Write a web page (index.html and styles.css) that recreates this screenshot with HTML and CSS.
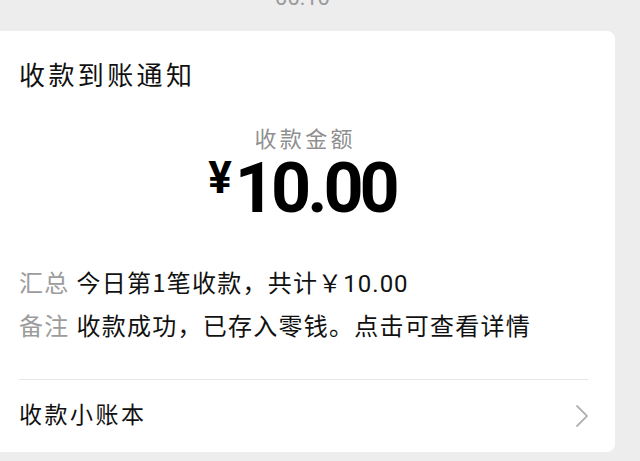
FILE: index.html
```html
<!DOCTYPE html>
<html lang="zh-CN">
<head>
<meta charset="utf-8">
<title>收款到账通知</title>
<link rel="stylesheet" href="styles.css">
</head>
<body>
<div class="page">
  <div class="time">00:10</div>
  <div class="card">
    <div class="title">收款到账通知</div>
    <div class="amount-label">收款金额</div>
    <div class="amount"><span class="yen">¥</span><span class="num">10.00</span></div>
    <div class="details">
      <div class="row"><span class="key">汇总</span><span class="val">今日第1笔收款，共计<span class="latin">￥10.00</span></span></div>
      <div class="row"><span class="key">备注</span><span class="val">收款成功，已存入零钱。点击可查看详情</span></div>
    </div>
    <div class="footer">
      <span class="footer-text">收款小账本</span>
      <svg class="chevron" width="14" height="24" viewBox="0 0 14 24"><polyline points="2,2 12,12 2,22" fill="none" stroke="#b4b4b4" stroke-width="1.8" stroke-linecap="round" stroke-linejoin="round"/></svg>
    </div>
  </div>
</div>
</body>
</html>
```

FILE: styles.css
```css
html, body {
  margin: 0;
  padding: 0;
  background: #ededed;
  overflow: hidden;
}
body {
  font-family: "Noto Sans CJK SC", "Noto Sans", sans-serif;
  color: #111;
}
.page {
  width: 640px;
  height: 461px;
  overflow: hidden;
}
.time {
  width: 605px;
  margin-top: -13px;
  line-height: 22px;
  font-family: Roboto, "Noto Sans", sans-serif;
  font-size: 22px;
  color: #9b9b9b;
  text-align: center;
}
.card {
  margin: 22px 25px 0 -10px;
  background: #fff;
  border-radius: 8px;
  padding: 25px 27px 6px 29px;
  height: 421px;
  box-sizing: border-box;
}
.title {
  font-size: 26px;
  line-height: 36px;
  letter-spacing: 3.4px;
  color: #111;
}
.amount-label {
  margin-top: 30px;
  font-size: 22px;
  line-height: 30px;
  letter-spacing: 3.3px;
  padding-left: 3.3px;
  color: #8f8f8f;
  text-align: center;
}
.amount {
  margin-top: 1px;
  display: flex;
  justify-content: center;
  align-items: flex-start;
  font-family: Roboto, "Noto Sans", sans-serif;
  font-weight: 700;
  color: #000;
  padding-right: 3px;
}
.yen {
  font-size: 44px;
  line-height: 44px;
  margin-top: 3px;
  margin-right: 3px;
}
.num {
  font-size: 70px;
  line-height: 70px;
  letter-spacing: -4px;
}
.details {
  margin-top: 37px;
}
.row {
  display: flex;
  font-size: 24px;
  line-height: 43px;
  letter-spacing: 1.25px;
  white-space: nowrap;
}
.key {
  color: #9c9c9c;
  margin-right: 7px;
}
.val {
  color: #111;
}
.latin {
  font-family: Roboto, "Noto Sans", sans-serif;
  letter-spacing: 1px;
  line-height: 1;
}
.footer {
  margin-top: 33px;
  border-top: 1px solid #e6e6e6;
  height: 66px;
  display: flex;
  align-items: center;
  justify-content: space-between;
}
.footer-text {
  font-size: 23px;
  line-height: 30px;
  letter-spacing: 2.5px;
  color: #111;
}
.chevron {
  display: block;
  margin-top: 6px;
  margin-right: -1px;
}
```
